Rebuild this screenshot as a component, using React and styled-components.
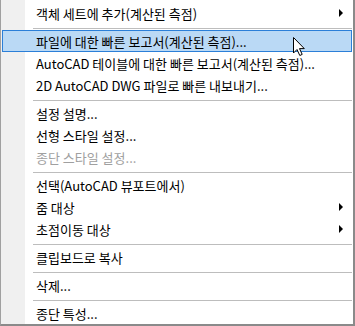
import React from "react";
import styled, { createGlobalStyle } from "styled-components";

const Global = createGlobalStyle`
  html, body { margin: 0; padding: 0; background: #ffffff; }
  body { font-family: "Noto Sans CJK KR", "Noto Sans", sans-serif; }
`;

const Menu = styled.div`
  position: relative;
  width: 355px;
  height: 326px;
  box-sizing: border-box;
  padding-top: 2px;
  border-left: 1px solid #a0a0a0;
  border-right: 2px solid #8a8a8a;
  border-bottom: 2px solid #8a8a8a;
  background: linear-gradient(to right, #f0f0f0 0 24px, #ffffff 24px);
  overflow: hidden;
`;

const Item = styled.div`
  height: 22px;
  box-sizing: border-box;
  margin: 0 1px;
  padding: 0 8px 0 33px;
  display: flex;
  align-items: center;
  justify-content: space-between;
  font-size: 13px;
  white-space: nowrap;
  color: ${(p) => (p.$disabled ? "#a0a0a0" : "#000000")};
  border: 1px solid ${(p) => (p.$active ? "#2b7fd8" : "transparent")};
  background: ${(p) => (p.$active ? "#bad9f5" : "transparent")};
`;

const Label = styled.span`
  line-height: 1;
`;

const Arrow = styled.span`
  width: 0;
  height: 0;
  border-top: 4px solid transparent;
  border-bottom: 4px solid transparent;
  border-left: 4px solid #000;
`;

const Separator = styled.div`
  height: 1px;
  margin: 4px 1px 1px 32px;
  background: #bdbdbd;
`;

const Cursor = styled.svg`
  position: absolute;
  left: 291px;
  top: 36px;
  pointer-events: none;
`;

const entries = [
  { label: "객체 세트에 추가(계산된 측점)", sub: true },
  { sep: true },
  { label: "파일에 대한 빠른 보고서(계산된 측점)...", active: true },
  { label: "AutoCAD 테이블에 대한 빠른 보고서(계산된 측점)..." },
  { label: "2D AutoCAD DWG 파일로 빠른 내보내기..." },
  { sep: true },
  { label: "설정 설명..." },
  { label: "선형 스타일 설정..." },
  { label: "종단 스타일 설정...", disabled: true },
  { sep: true },
  { label: "선택(AutoCAD 뷰포트에서)" },
  { label: "줌 대상", sub: true },
  { label: "초점이동 대상", sub: true },
  { sep: true },
  { label: "클립보드로 복사" },
  { sep: true },
  { label: "삭제..." },
  { sep: true },
  { label: "종단 특성..." },
];

export default function App() {
  return (
    <>
      <Global />
      <Menu>
        {entries.map((e, i) =>
          e.sep ? (
            <Separator key={i} />
          ) : (
            <Item key={i} $active={e.active} $disabled={e.disabled}>
              <Label>{e.label}</Label>
              {e.sub && <Arrow />}
            </Item>
          )
        )}
        <Cursor width="14" height="21" viewBox="0 0 14 21">
          <path
            d="M1.5 1.5 L1.5 17 L5 13.5 L7.8 19.5 L10.2 18.4 L7.5 12.6 L12.3 12.6 Z"
            fill="#ffffff"
            stroke="#000000"
            strokeWidth="1"
            strokeLinejoin="miter"
          />
        </Cursor>
      </Menu>
    </>
  );
}
